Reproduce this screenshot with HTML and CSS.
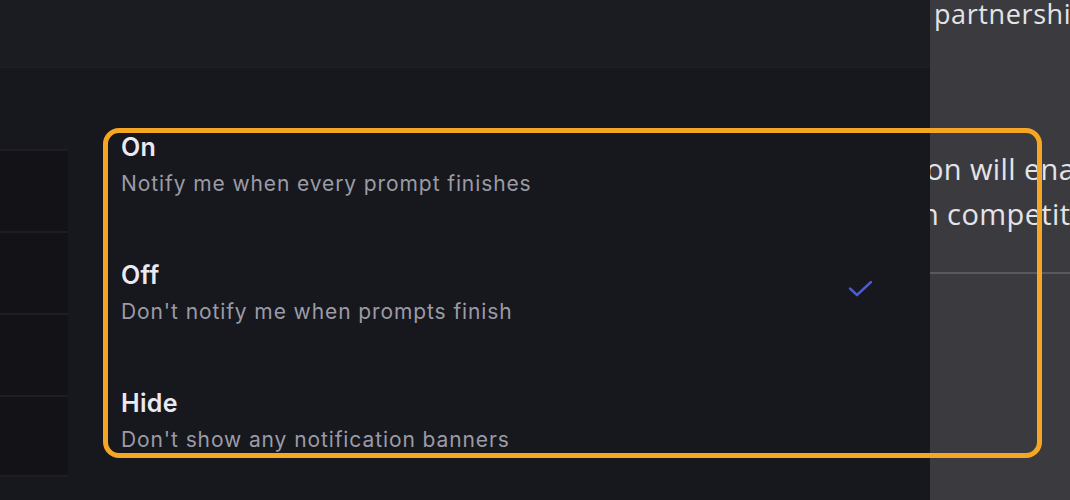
FILE: index.html
```html
<!DOCTYPE html>
<html lang="en">
<head>
<meta charset="utf-8">
<title>Notifications</title>
<link rel="stylesheet" href="styles.css">
</head>
<body>
<div class="app">
  <div class="main">
    <div class="topbar"></div>
    <div class="content">
      <div class="leftcol">
        <div class="lrow"></div>
        <div class="lrow"></div>
        <div class="lrow"></div>
        <div class="lrow"></div>
      </div>
      <ul class="menu">
        <li class="option">
          <div class="texts">
            <div class="title">On</div>
            <div class="desc">Notify me when every prompt finishes</div>
          </div>
        </li>
        <li class="option">
          <div class="texts">
            <div class="title">Off</div>
            <div class="desc">Don't notify me when prompts finish</div>
          </div>
          <svg class="check" width="26" height="18" viewBox="0 0 26 18"><path d="M2 8.5 L9 15 L23 2" fill="none" stroke="#4a5cd4" stroke-width="2.4" stroke-linecap="round" stroke-linejoin="round"/></svg>
        </li>
        <li class="option">
          <div class="texts">
            <div class="title">Hide</div>
            <div class="desc">Don't show any notification banners</div>
          </div>
        </li>
      </ul>
    </div>
  </div>
  <aside class="side">
    <div class="side-top">partnership</div>
    <p class="side-text"><span class="l1">on will enable</span><span class="l2">n competitive</span></p>
    <div class="side-rule"></div>
  </aside>
  <div class="highlight"></div>
</div>
</body>
</html>
```
FILE: styles.css
```css
* { box-sizing: border-box; }
html, body {
  margin: 0;
  padding: 0;
  width: 1070px;
  height: 500px;
  overflow: hidden;
  background: #17171e;
  font-family: Inter, "Noto Sans", sans-serif;
}
.app {
  position: relative;
  display: flex;
  width: 1070px;
  height: 500px;
}
.main {
  width: 930px;
  height: 500px;
  display: flex;
  flex-direction: column;
  background: #17171e;
  overflow: hidden;
}
.topbar {
  flex: 0 0 68px;
  background: #1b1b22;
  border-bottom: 1px solid #1e1e25;
}
.content {
  flex: 1;
  display: flex;
  min-height: 0;
}
.leftcol {
  width: 68px;
  flex-shrink: 0;
  padding-top: 81px;
}
.lrow {
  height: 82px;
  background: #121217;
  border-top: 2px solid #1d1d23;
}
.lrow:last-child { border-bottom: 2px solid #1d1d23; }
.menu {
  list-style: none;
  margin: 0;
  padding: 64px 0 0 53px;
  flex: 1;
  display: flex;
  flex-direction: column;
}
.option {
  flex: 0 0 128px;
  display: flex;
  align-items: flex-start;
  justify-content: space-between;
  padding-right: 56px;
}
.title {
  font-size: 25px;
  font-weight: 600;
  line-height: 30px;
  letter-spacing: 0.3px;
  color: #e9e9ef;
}
.desc {
  margin-top: 9px;
  font-size: 21px;
  line-height: 26px;
  letter-spacing: 0.9px;
  color: #9b9ba5;
}
.check {
  margin-top: 20px;
}
.side {
  width: 140px;
  background: #3b3b3f;
  overflow: hidden;
  color: #e4e4e8;
  font-family: "Open Sans", Inter, sans-serif;
}
.side-top {
  font-size: 27px;
  line-height: 32px;
  letter-spacing: 0.6px;
  margin: -2px 0 0 4px;
  white-space: nowrap;
}
.side-text {
  margin: 116px 0 0 0;
  font-size: 29px;
  line-height: 45px;
  letter-spacing: 0.4px;
  white-space: nowrap;
}
.side-text span { display: block; }
.side-text .l1 { margin-left: -4px; }
.side-text .l2 { margin-left: -9px; }
.side-rule {
  margin-top: 36px;
  height: 2px;
  background: #58585e;
}
.highlight {
  position: absolute;
  left: 103px;
  top: 128px;
  width: 939px;
  height: 330px;
  border: 5px solid #f5a623;
  border-radius: 16px;
  pointer-events: none;
}
```
